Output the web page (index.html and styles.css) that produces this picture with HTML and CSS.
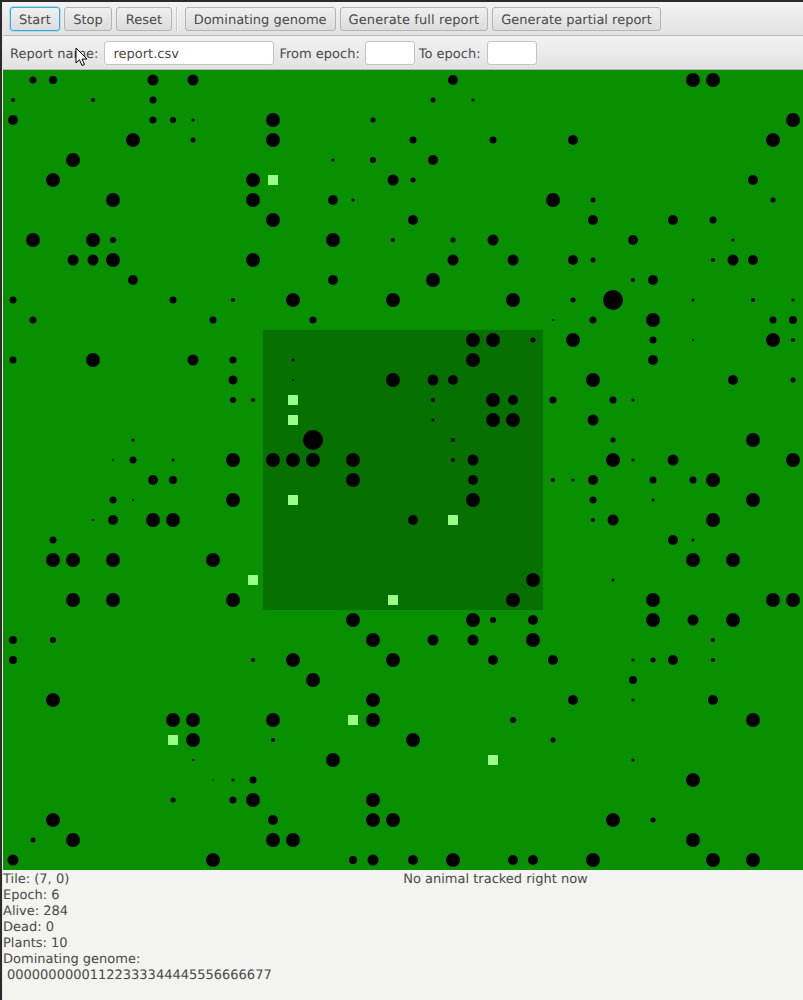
FILE: index.html
```html
<!DOCTYPE html>
<html lang="en">

<head>
    <meta charset="UTF-8">
    <meta name="viewport" content="width=device-width, initial-scale=1.0">
    <title>Evolution simulator</title>
    <link rel="stylesheet" href="styles.css">
</head>

<body>
    <div class="window">
        <div class="toolbar toolbar-main">
            <button class="btn btn-focused">Start</button>
            <button class="btn btn-roomy">Stop</button>
            <button class="btn btn-roomy">Reset</button>
            <span class="separator"></span>
            <button class="btn">Dominating genome</button>
            <button class="btn btn-spaced">Generate full report</button>
            <button class="btn">Generate partial report</button>
        </div>
        <div class="toolbar toolbar-report">
            <label>Report name:</label>
            <input class="field field-name" type="text" value="report.csv">
            <label>From epoch:</label>
            <input class="field field-epoch" type="text">
            <label>To epoch:</label>
            <input class="field field-epoch" type="text">
        </div>

        <svg id="map" class="map" viewBox="0 0 800 800" width="800" height="800">
            <rect class="jungle" x="260" y="260" width="280" height="280"></rect>
        </svg>

        <div class="stats">
            <div class="stats-left">
                <div>Tile: (7, 0)</div>
                <div>Epoch: 6</div>
                <div>Alive: 284</div>
                <div>Dead: 0</div>
                <div>Plants: 10</div>
                <div>Dominating genome:</div>
                <div class="genome">00000000001122333344445556666677</div>
            </div>
            <div class="stats-tracked">No animal tracked right now</div>
        </div>
    </div>

    <svg class="cursor" width="14" height="22" viewBox="0 0 14 22">
        <path d="M1 1 L1 16 L4.5 12.8 L7 18.5 L9.5 17.4 L7 12 L12 12 Z" fill="#fff" stroke="#000" stroke-width="1"></path>
    </svg>

    <script>
        // animals per row of the map: [column, diameter]
        var animals = {
            0: [[1, 7], [2, 8], [7, 11], [9, 11], [22, 10], [34, 14], [35, 14]],
            1: [[0, 4], [4, 4], [7, 7], [21, 5], [23, 3]],
            2: [[0, 10], [7, 7], [8, 6], [9, 3], [13, 14], [18, 5], [39, 14]],
            3: [[6, 14], [9, 5], [13, 14], [20, 7], [24, 7], [28, 10], [38, 14]],
            4: [[3, 14], [16, 3], [18, 6], [21, 10]],
            5: [[2, 14], [12, 14], [19, 11], [20, 5], [37, 10]],
            6: [[5, 14], [12, 14], [16, 10], [17, 3], [27, 14], [29, 5], [38, 5]],
            7: [[13, 14], [20, 10], [29, 10], [33, 10], [35, 7]],
            8: [[1, 14], [4, 14], [5, 6], [16, 14], [19, 4], [22, 5], [24, 11], [31, 10], [36, 3]],
            9: [[3, 11], [4, 11], [5, 14], [12, 14], [22, 11], [25, 11], [28, 10], [29, 5], [35, 4], [36, 11], [37, 10]],
            10: [[6, 10], [16, 10], [21, 14], [31, 4], [32, 10]],
            11: [[0, 7], [8, 7], [11, 4], [14, 14], [19, 14], [25, 14], [28, 5], [30, 20], [34, 3], [37, 4], [39, 3]],
            12: [[1, 7], [10, 7], [15, 7], [27, 2], [29, 7], [32, 14], [38, 7], [39, 8]],
            13: [[23, 14], [24, 14], [26, 5], [28, 14], [32, 7], [34, 2], [38, 14], [39, 4]],
            14: [[0, 7], [4, 14], [9, 11], [11, 7], [14, 3], [23, 14], [32, 10]],
            15: [[11, 9], [14, 2], [19, 14], [21, 11], [22, 10], [29, 14], [36, 10], [39, 5]],
            16: [[11, 6], [12, 4], [21, 4], [24, 14], [25, 10], [27, 7], [30, 7], [31, 3]],
            17: [[21, 3], [24, 14], [25, 14], [29, 11]],
            18: [[6, 3], [15, 20], [22, 4], [30, 5], [37, 14]],
            19: [[5, 2], [6, 7], [8, 3], [11, 14], [13, 14], [14, 14], [15, 14], [17, 14], [22, 4], [23, 11], [30, 14], [31, 3], [33, 11], [39, 14]],
            20: [[7, 10], [8, 8], [17, 14], [23, 10], [27, 4], [28, 3], [29, 10], [32, 7], [34, 7], [35, 14]],
            21: [[5, 7], [6, 2], [11, 14], [23, 14], [29, 7], [32, 3], [37, 14]],
            22: [[4, 2], [5, 10], [7, 14], [8, 14], [20, 10], [29, 4], [30, 11], [35, 14]],
            23: [[2, 7], [33, 10], [34, 3]],
            24: [[2, 14], [3, 14], [5, 14], [10, 14], [34, 14], [36, 14]],
            25: [[26, 14], [30, 3]],
            26: [[3, 14], [5, 14], [11, 14], [25, 14], [32, 14], [38, 14], [39, 14]],
            27: [[17, 14], [23, 14], [24, 6], [26, 10], [32, 14], [34, 11], [36, 14]],
            28: [[0, 8], [2, 6], [18, 14], [21, 11], [23, 11], [26, 14], [35, 4]],
            29: [[0, 8], [12, 4], [14, 14], [19, 14], [24, 10], [27, 10], [31, 3], [32, 5], [33, 10], [35, 4]],
            30: [[15, 14], [31, 8]],
            31: [[2, 14], [18, 14], [28, 10], [31, 3], [35, 10]],
            32: [[8, 14], [9, 14], [13, 14], [18, 14], [25, 6], [37, 14]],
            33: [[9, 14], [13, 4], [20, 14], [27, 5]],
            34: [[9, 2], [16, 14], [31, 3]],
            35: [[10, 1.5], [11, 3], [12, 7], [34, 14]],
            36: [[8, 5], [11, 7], [12, 14], [18, 14]],
            37: [[2, 14], [13, 10], [18, 14], [19, 14], [30, 14], [32, 5]],
            38: [[1, 5], [3, 14], [13, 14], [14, 14], [34, 14]],
            39: [[0, 11], [10, 14], [17, 8], [18, 11], [20, 10], [22, 14], [25, 10], [26, 10], [29, 14], [35, 14], [37, 14]]
        };
        var plants = [[13, 5], [14, 16], [14, 17], [14, 21], [22, 22], [12, 25], [19, 26], [17, 32], [8, 33], [24, 34]];

        var map = document.getElementById("map");
        var tile = 20;

        function addShape(name, attrs) {
            var shape = document.createElementNS("http://www.w3.org/2000/svg", name);
            for (var key in attrs) {
                shape.setAttribute(key, attrs[key]);
            }
            map.appendChild(shape);
        }

        plants.forEach(function (plant) {
            addShape("rect", {
                class: "plant",
                x: plant[0] * tile + 5,
                y: plant[1] * tile + 5,
                width: 10,
                height: 10
            });
        });

        for (var row in animals) {
            animals[row].forEach(function (animal) {
                addShape("circle", {
                    cx: animal[0] * tile + 10,
                    cy: row * tile + 10,
                    r: animal[1] / 2
                });
            });
        }
    </script>
</body>

</html>
```

FILE: styles.css
```css
* {
    margin: 0;
    padding: 0;
    box-sizing: border-box;
    font-family: 'DejaVu Sans', sans-serif;
    text-rendering: geometricPrecision;
}

body {
    background-color: #2b2b2b;
    height: 1000px;
    overflow: hidden;
    font-size: 13px;
    color: #4a4a4a;
    padding: 2px 0 0 2px;
}

.window {
    width: 801px;
    height: 998px;
    background-color: #f3f3f0;
    border-left: 1px solid #e8e8e8;
    display: flex;
    flex-direction: column;
}

.toolbar {
    display: flex;
    align-items: center;
    background: linear-gradient(#f3f3f3, #e2e2e2);
    border-bottom: 1px solid #b8b8b8;
}

.toolbar-main {
    height: 34px;
    padding: 1px 0 0 7px;
    gap: 4px;
}

.toolbar-report {
    height: 34px;
    padding: 1px 0 0 7px;
    gap: 5px;
}

.toolbar-report label {
    padding-top: 2px;
}

.btn {
    height: 24px;
    padding: 2px 8px 0;
    font-size: 13px;
    color: #4a4a4a;
    background: linear-gradient(#f0f0f0, #dcdcdc);
    border: 1px solid #b4b4b4;
    border-radius: 3px;
}

.btn-focused {
    border-color: #3fa9d0;
    box-shadow: 0 0 0 1px #a8dcef;
}

.btn-roomy {
    padding: 2px 8.5px 0;
}

.btn-spaced {
    letter-spacing: 0.1px;
}

.separator {
    width: 2px;
    height: 24px;
    margin-right: 3px;
    background-color: #c8c8c8;
    border-right: 1px solid #f8f8f8;
}

.field {
    height: 24px;
    padding: 2px 8px 0;
    font-size: 13px;
    color: #4a4a4a;
    background-color: #fff;
    border: 1px solid #c4c4c4;
    border-radius: 3px;
}

.field-name {
    width: 170px;
    margin-left: 1px;
}

.field-epoch {
    width: 50px;
}

.field-epoch + label {
    margin: 0 1px 0 -1px;
}

.map {
    display: block;
    flex-shrink: 0;
    background-color: #089000;
}

.jungle {
    fill: #067000;
}

.plant {
    fill: #99ff88;
}

.stats {
    display: flex;
    line-height: 16px;
    padding-top: 2px;
    flex: 1;
}

.stats-left {
    width: 400px;
}

.genome {
    padding-left: 4px;
}

.stats-tracked {
    width: 185px;
    text-align: center;
}

.cursor {
    position: absolute;
    left: 75px;
    top: 47px;
}
```
